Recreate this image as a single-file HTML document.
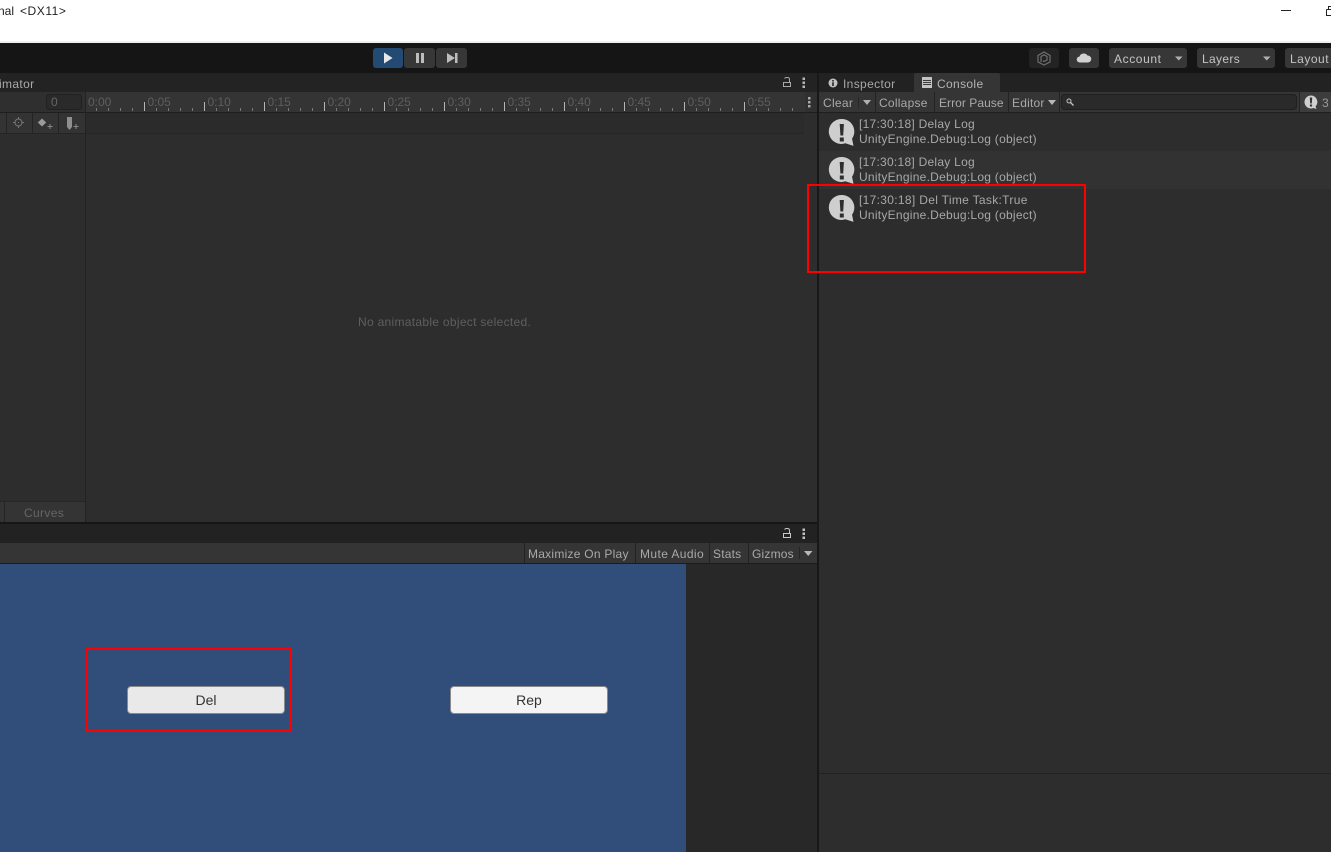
<!DOCTYPE html>
<html><head><meta charset="utf-8"><style>
html,body{margin:0;padding:0;background:#2d2d2d}
#r{position:relative;width:1331px;height:852px;overflow:hidden;background:#2d2d2d;font-family:"Liberation Sans",sans-serif;font-size:12px;color:#b4b4b4}
#r div{position:absolute;box-sizing:border-box;white-space:nowrap}
#r svg{position:absolute;overflow:visible}
.t{line-height:14px;letter-spacing:.35px}
.b{background:#373737;border-radius:3px;height:20px;top:48px}
.sep{background:#232323;width:1px}
.log{color:#a8a8a8;line-height:15px;letter-spacing:.26px}
.red{border:2px solid #f00}
.btn{border-radius:4px;border:1px solid #8a8a8a;color:#333;text-align:center;font-size:14px;line-height:26px;height:28px;width:158px;top:686px}
</style></head><body><div id="r">
<div style="left:0;top:0;width:1331px;height:41px;background:#fff"></div>
<div style="left:0;top:41px;width:1331px;height:2px;background:#efefef"></div>
<div style="left:-2px;top:4px;color:#222;font-size:12px;line-height:14px">nal</div>
<div style="left:20px;top:4px;color:#222;font-size:12px;line-height:14px;letter-spacing:.55px">&lt;DX11&gt;</div>
<div style="left:1281px;top:10px;width:10px;height:1px;background:#222"></div>
<svg style="left:1326px;top:5px" width="5" height="11"><path d="M.5 4.500V10.500H5M.5 4.500H5M2.500 4V1.500H5" fill="none" stroke="#222"/></svg>

<div style="left:0;top:43px;width:1331px;height:30px;background:#151515"></div>
<div class="b" style="left:373px;width:30px;background:#234a73"></div>
<div class="b" style="left:404px;width:31px"></div>
<div class="b" style="left:436px;width:31px"></div>
<svg style="left:373px;top:48px" width="94" height="20"><path d="M11 4.500L19.500 10 11 15.500Z" fill="#e8e8e8"/><path d="M43 5h3v10h-3zM48 5h3v10h-3z" fill="#bdbdbd"/><path d="M74 5L82 10 74 15ZM82 5h2.500v10H82z" fill="#bdbdbd"/></svg>

<div class="b" style="left:1029px;width:30px;background:#232323"></div>
<svg style="left:1037px;top:51px" width="14" height="15" fill="none" stroke="#6f6f6f" stroke-width="1.200"><path d="M7 1L13 4.500V11L7 14 1 11V4.500ZM4 11V5.500L7 3.800 10 5.500V9L7 10.500 5.800 9.800"/></svg>
<div class="b" style="left:1069px;width:30px"></div>
<svg style="left:1077px;top:52px" width="14" height="11"><path d="M3 10.500a3 3 0 0 1-.5-6A4.500 4.500 0 0 1 10.500 3.500 3.500 3.500 0 0 1 11 10.500Z" fill="#d2d2d2"/></svg>
<div class="b t" style="left:1109px;width:78px;color:#c4c4c4;padding:4px 0 0 5px;letter-spacing:.6px">Account</div>
<div class="b t" style="left:1197px;width:78px;color:#c4c4c4;padding:4px 0 0 5px">Layers</div>
<div class="b t" style="left:1285px;width:60px;color:#c4c4c4;padding:4px 0 0 5px;letter-spacing:.5px">Layout</div>
<svg style="left:1175px;top:56px" width="100" height="5" fill="#b0b0b0"><path d="M0 .5h7.500L3.750 4.500zM88 .5h7.500L91.750 4.500z"/></svg>

<div style="left:0;top:73px;width:817px;height:19px;background:#232323"></div>
<div class="t" style="left:-1px;top:77px;color:#aaa">imator</div>
<svg style="left:782px;top:77px" width="26" height="13" fill="none"><path d="M1.500 5.500h7v4h-7zM2.500 1.500c.5-.7 1-1 2-1h1c1.500 0 2 .8 2 2V5.500" stroke="#a8a8a8"/><path d="M20.500 0.500h2.500v2.500h-2.500zM20.500 4.500h2.500v2.500h-2.500zM20.500 8.500h2.500v2.500h-2.500z" fill="#b5b5b5"/></svg>

<div style="left:0;top:92px;width:85px;height:20px;background:#2f2f2f"></div>
<div style="left:46px;top:94px;width:36px;height:16px;background:#2a2a2a;border:1px solid #212121;border-radius:3px;color:#666;padding-left:4px;line-height:14px">0</div>
<div style="left:85px;top:92px;width:720px;height:20px;background:#343434"></div>
<div style="left:805px;top:92px;width:12px;height:20px;background:#303030"></div>
<div style="left:0;top:112px;width:817px;height:1px;background:#1e1e1e"></div>
<div style="left:85px;top:113px;width:719px;height:20px;background:#2b2b2b"></div>
<div style="left:85px;top:133px;width:719px;height:1px;background:#262626"></div>
<div style="left:0;top:113px;width:85px;height:20px;background:#333"></div>
<div style="left:0;top:133px;width:85px;height:1px;background:#252525"></div>
<div class="sep" style="left:6px;top:113px;height:20px"></div>
<div class="sep" style="left:32px;top:113px;height:20px"></div>
<div class="sep" style="left:58px;top:113px;height:20px"></div>
<div class="sep" style="left:85px;top:92px;height:430px"></div>
<svg style="left:0;top:113px" width="85" height="20"><g fill="none" stroke="#777"><circle cx="18.500" cy="9.500" r="3.500"/><path d="M18.500 4v2M18.500 13v2M13 9.500h2M22 9.500h2M18 9.500h1"/></g><path d="M42 5.500l4.200 4-4.200 4-4.200-4z" fill="#9a9a9a"/><path d="M48.500 13h1v-2h1v2h2v1h-2v2h-1v-2h-2v-1zM74.500 13h1v-2h1v2h2v1h-2v2h-1v-2h-2v-1z" fill="#888"/><path d="M67 4h5v10l-2.500 3L67 14z" fill="#8f8f8f"/></svg>
<svg style="left:84px;top:92px" width="721" height="20" fill="none">
<path stroke="#7a7a7a" d="M12.500 16v3M24.500 16v3M36.500 16v3M48.500 16v3M72.500 16v3M84.500 16v3M96.500 16v3M108.500 16v3M132.500 16v3M144.500 16v3M156.500 16v3M168.500 16v3M192.500 16v3M204.500 16v3M216.500 16v3M228.500 16v3M252.500 16v3M264.500 16v3M276.500 16v3M288.500 16v3M312.500 16v3M324.500 16v3M336.500 16v3M348.500 16v3M372.500 16v3M384.500 16v3M396.500 16v3M408.500 16v3M432.500 16v3M444.500 16v3M456.500 16v3M468.500 16v3M492.500 16v3M504.500 16v3M516.500 16v3M528.500 16v3M552.500 16v3M564.500 16v3M576.500 16v3M588.500 16v3M612.500 16v3M624.500 16v3M636.500 16v3M648.500 16v3M672.500 16v3M684.500 16v3M696.500 16v3M708.500 16v3"/>
<path stroke="#b5b5b5" d="M60.500 10v9M120.500 10v9M180.500 10v9M240.500 10v9M300.500 10v9M360.500 10v9M420.500 10v9M480.500 10v9M540.500 10v9M600.500 10v9M660.500 10v9"/>
</svg>
<svg style="left:85px;top:92px" width="720" height="20" font-family="Liberation Sans" font-size="12" fill="#5e5e5e">
<text x="3" y="14">0:00</text><text x="62.500" y="14">0:05</text><text x="122.500" y="14">0:10</text><text x="182.500" y="14">0:15</text><text x="242.500" y="14">0:20</text><text x="302.500" y="14">0:25</text><text x="362.500" y="14">0:30</text><text x="422.500" y="14">0:35</text><text x="482.500" y="14">0:40</text><text x="542.500" y="14">0:45</text><text x="602.500" y="14">0:50</text><text x="662.500" y="14">0:55</text>
<path d="M723 5h2.500v2.500H723zM723 9h2.500v2.500H723zM723 13h2.500v2.500H723z" fill="#aaa"/>
</svg>

<div class="t" style="left:358px;top:315px;color:#5f5f5f;letter-spacing:.3px">No animatable object selected.</div>

<div style="left:0;top:501px;width:85px;height:21px;background:#343434;border-top:1px solid #262626"></div>
<div class="sep" style="left:4px;top:502px;height:20px"></div>
<div class="t" style="left:24px;top:506px;color:#666">Curves</div>

<div style="left:0;top:522px;width:817px;height:2px;background:#161616"></div>
<div style="left:0;top:524px;width:817px;height:19px;background:#222"></div>
<svg style="left:782px;top:528px" width="26" height="13" fill="none"><path d="M1.500 5.500h7v4h-7zM2.500 1.500c.5-.7 1-1 2-1h1c1.500 0 2 .8 2 2V5.500" stroke="#c8c8c8"/><path d="M20.500 0.500h2.500v2.500h-2.500zM20.500 4.500h2.500v2.500h-2.500zM20.500 8.500h2.500v2.500h-2.500z" fill="#c0c0c0"/></svg>
<div style="left:0;top:543px;width:817px;height:20px;background:#353535"></div>
<div style="left:0;top:563px;width:817px;height:1px;background:#1c1c1c"></div>
<div class="sep" style="left:524px;top:543px;height:20px"></div>
<div class="sep" style="left:635px;top:543px;height:20px"></div>
<div class="sep" style="left:709px;top:543px;height:20px"></div>
<div class="sep" style="left:748px;top:543px;height:20px"></div>
<div style="left:799px;top:547px;width:1px;height:12px;background:#252525"></div>
<div class="t" style="left:528px;top:547px;color:#a9a9a9;letter-spacing:.25px">Maximize On Play</div>
<div class="t" style="left:640px;top:547px;color:#a9a9a9;letter-spacing:.4px">Mute Audio</div>
<div class="t" style="left:713px;top:547px;color:#a9a9a9;letter-spacing:.2px">Stats</div>
<div class="t" style="left:752px;top:547px;color:#a9a9a9;letter-spacing:.2px">Gizmos</div>
<svg style="left:804px;top:551px" width="9" height="5"><path d="M0 0h8.500L4.250 5z" fill="#b8b8b8"/></svg>

<div style="left:0;top:564px;width:686px;height:288px;background:#314d79"></div>
<div style="left:686px;top:564px;width:131px;height:288px;background:#282828"></div>
<div class="btn" style="left:127px;background:#e9e9e9">Del</div>
<div class="btn" style="left:450px;background:#f4f4f4">Rep</div>
<div class="red" style="left:86px;top:648px;width:206px;height:84px"></div>

<div style="left:817px;top:73px;width:2px;height:779px;background:#181818"></div>
<div style="left:819px;top:73px;width:512px;height:19px;background:#222"></div>
<div style="left:914px;top:73px;width:86px;height:19px;background:#353535;border-radius:2px 2px 0 0"></div>
<svg style="left:828px;top:78px" width="10" height="10"><circle cx="5" cy="5" r="4.500" fill="#c0c0c0"/><path d="M4.200 2h1.600v1.500H4.200zM4.200 4.300h1.600V8H4.200z" fill="#222"/></svg>
<div class="t" style="left:843px;top:77px;color:#a8a8a8">Inspector</div>
<svg style="left:922px;top:77px" width="10" height="11"><path d="M0 0h10v11H0z" fill="#c4c4c4"/><path d="M1 3.500h8M1 5.500h8M1 7.500h8" stroke="#3a3a3a"/></svg>
<div class="t" style="left:937px;top:77px;color:#b4b4b4">Console</div>

<div style="left:819px;top:92px;width:512px;height:20px;background:#353535"></div>
<div style="left:819px;top:112px;width:512px;height:1px;background:#1f1f1f"></div>
<div class="t" style="left:823px;top:96px;color:#a9a9a9;letter-spacing:.3px">Clear</div>
<div style="left:858px;top:97px;width:1px;height:11px;background:#282828"></div>
<svg style="left:863px;top:100px" width="8" height="5"><path d="M0 0h8L4 5z" fill="#b0b0b0"/></svg>
<div class="sep" style="left:875px;top:92px;height:20px"></div>
<div class="t" style="left:879px;top:96px;color:#a9a9a9;letter-spacing:.25px">Collapse</div>
<div class="sep" style="left:934px;top:92px;height:20px"></div>
<div class="t" style="left:939px;top:96px;color:#a9a9a9;letter-spacing:.05px">Error Pause</div>
<div class="sep" style="left:1008px;top:92px;height:20px"></div>
<div class="t" style="left:1012px;top:96px;color:#a9a9a9;letter-spacing:.2px">Editor</div>
<svg style="left:1048px;top:100px" width="8" height="5"><path d="M0 0h8L4 5z" fill="#b8b8b8"/></svg>
<div class="sep" style="left:1059px;top:92px;height:20px"></div>
<div style="left:1061px;top:94px;width:236px;height:16px;background:#2a2a2a;border:1px solid #1f1f1f;border-radius:4px"></div>
<svg style="left:1066px;top:98px" width="8" height="8" fill="none" stroke="#c4c4c4"><circle cx="3" cy="3" r="2"/><path d="M4.500 4.500L7.500 7.500" stroke-width="1.300"/></svg>
<div class="sep" style="left:1299px;top:92px;height:20px"></div>
<div style="left:1300px;top:92px;width:31px;height:20px;background:#3d3d3d"></div>
<svg style="left:1304px;top:95px" width="16" height="15"><path d="M7 0.500a6.500 6.500 0 1 0 2.500 12.500l3 1-1-2.500A6.500 6.500 0 0 0 7 .500Z" fill="#d0d0d0"/><path d="M5.800 2.500h2.400l-.4 6H6.200zM5.900 9.500h2.200v2H5.900z" fill="#333"/></svg>
<div class="t" style="left:1322px;top:96px;color:#9a9a9a">3</div>

<div style="left:819px;top:113px;width:512px;height:38px;background:#2d2d2d"></div>
<div style="left:819px;top:151px;width:512px;height:38px;background:#323232"></div>
<svg style="left:829px;top:119px" width="27" height="106"><defs><g id="i"><path d="M13 0a13 13 0 1 0 4 25.300L25.500 28 24 20.500A13 13 0 0 0 13 0Z" transform="scale(.96)" fill="#cecece"/><path d="M10.700 5h4.200l-.7 11.500H11.400zM10.800 18.500h4v4h-4z" fill="#2e2e2e"/></g></defs><use href="#i"/><use href="#i" y="38"/><use href="#i" y="76"/></svg>
<div class="log" style="left:859px;top:117px">[17:30:18] Delay Log<br>UnityEngine.Debug:Log (object)</div>
<div class="log" style="left:859px;top:155px">[17:30:18] Delay Log<br>UnityEngine.Debug:Log (object)</div>
<div class="log" style="left:859px;top:193px"><span style="letter-spacing:.32px">[17:30:18] Del Time Task:True</span><br>UnityEngine.Debug:Log (object)</div>
<div class="red" style="left:807px;top:184px;width:279px;height:89px"></div>
<div style="left:819px;top:773px;width:512px;height:1px;background:#222"></div>
</div></body></html>
